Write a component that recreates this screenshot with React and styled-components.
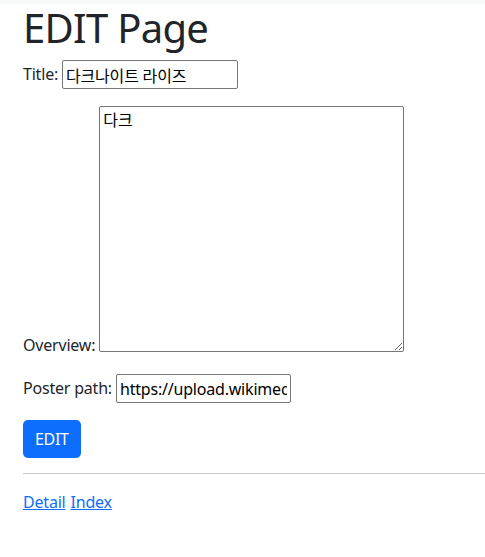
import React from "react";
import styled, { createGlobalStyle } from "styled-components";

const GlobalStyle = createGlobalStyle`
	body {
		margin: 0;
		background: #fff;
		color: #212529;
		font-family: "Noto Sans", "Noto Sans CJK KR", sans-serif;
		font-size: 16px;
		line-height: 1.5;
	}
`;

const TopBar = styled.div`
	height: 4px;
	background-color: #f8f9fa;
`;

const Container = styled.main`
	padding-left: 23px;
`;

const Heading = styled.h1`
	margin: 0;
	font-size: 40px;
	font-weight: 400;
	line-height: 48px;
	letter-spacing: -0.7px;
	color: #212529;
`;

const Form = styled.form`
	display: flex;
	flex-direction: column;
	align-items: flex-start;
`;

const Row = styled.div`
	display: flex;
	align-items: ${(p) => (p.$bottom ? "flex-end" : "center")};
	gap: 4px;
	margin-top: ${(p) => p.$top}px;
`;

const Label = styled.label`
	line-height: 1.2;
	letter-spacing: -0.2px;
`;

const Input = styled.input`
	box-sizing: border-box;
	width: ${(p) => p.$width}px;
	height: 29px;
	padding: 1px 3px;
	border: 1px solid #767676;
	border-radius: 2px;
	font-family: "Noto Sans", "Noto Sans CJK KR", sans-serif;
	font-size: 16px;
	letter-spacing: -0.2px;
	color: #000;
`;

const TextArea = styled.textarea`
	box-sizing: border-box;
	width: 305px;
	height: 246px;
	padding: 2px 3px;
	border: 1px solid #767676;
	border-radius: 2px;
	font-family: "Noto Sans CJK KR", sans-serif;
	font-size: 16px;
	line-height: 1.3;
	color: #000;
	margin-bottom: 3px;
`;

const Button = styled.button`
	margin-top: 17px;
	height: 38px;
	padding: 0 12px;
	border: none;
	border-radius: 5px;
	background-color: #0d6efd;
	color: #fff;
	font-family: "Noto Sans", sans-serif;
	font-size: 16px;
	letter-spacing: -0.3px;
	cursor: pointer;
`;

const Rule = styled.hr`
	margin: 15px 0 0;
	border: 0;
	border-top: 1px solid #cbcbcb;
`;

const Links = styled.nav`
	display: flex;
	gap: 5px;
	margin-top: 16px;
	letter-spacing: -0.2px;
`;

const Link = styled.a`
	color: #0d6efd;
	text-decoration: underline;
`;

export default function App() {
	return (
		<>
			<GlobalStyle />
			<TopBar />
			<Container>
				<Heading>EDIT Page</Heading>
				<Form onSubmit={(e) => e.preventDefault()}>
					<Row $top={8}>
						<Label htmlFor="title">Title:</Label>
						<Input id="title" $width={176} defaultValue="다크나이트 라이즈" />
					</Row>
					<Row $top={17} $bottom>
						<Label htmlFor="overview">Overview:</Label>
						<TextArea id="overview" defaultValue="다크" />
					</Row>
					<Row $top={19}>
						<Label htmlFor="poster">Poster path:</Label>
						<Input
							id="poster"
							$width={175}
							defaultValue="https://upload.wikimedia.org/wikipedia/en/8/83/Dark_knight_rises_poster.jpg"
						/>
					</Row>
					<Button type="submit">EDIT</Button>
				</Form>
				<Rule />
				<Links>
					<Link href="#">Detail</Link>
					<Link href="#">Index</Link>
				</Links>
			</Container>
		</>
	);
}
